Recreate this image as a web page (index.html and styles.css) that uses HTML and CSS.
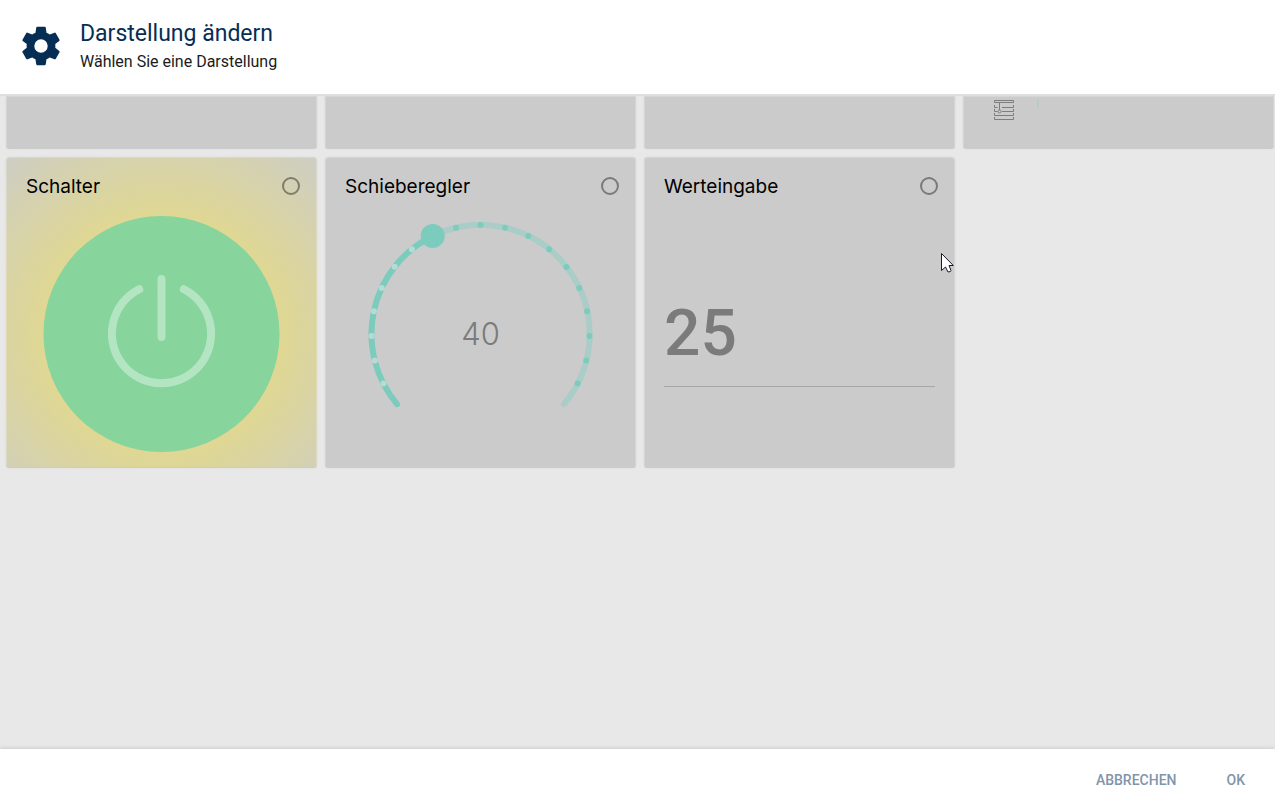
FILE: index.html
```html
<!DOCTYPE html>
<html lang="de">
<head>
    <meta charset="UTF-8">
    <meta name="viewport" content="width=device-width, initial-scale=1.0">
    <title>Darstellung ändern</title>
    <link rel="stylesheet" href="styles.css">
</head>
<body>

    <header class="dialog-header">
        <svg class="gear" viewBox="0 0 24 24" aria-hidden="true">
            <path d="M12,15.5A3.5,3.5 0 0,1 8.5,12A3.5,3.5 0 0,1 12,8.5A3.5,3.5 0 0,1 15.5,12A3.5,3.5 0 0,1 12,15.5M19.43,12.97C19.47,12.65 19.5,12.33 19.5,12C19.5,11.67 19.47,11.34 19.43,11L21.54,9.37C21.73,9.22 21.78,8.95 21.66,8.73L19.66,5.27C19.54,5.05 19.27,4.96 19.05,5.05L16.56,6.05C16.04,5.66 15.5,5.32 14.87,5.07L14.5,2.42C14.46,2.18 14.25,2 14,2H10C9.75,2 9.54,2.18 9.5,2.42L9.13,5.07C8.5,5.32 7.96,5.66 7.44,6.05L4.95,5.05C4.73,4.96 4.46,5.05 4.34,5.27L2.34,8.73C2.21,8.95 2.27,9.22 2.46,9.37L4.57,11C4.53,11.34 4.5,11.67 4.5,12C4.5,12.33 4.53,12.65 4.57,12.97L2.46,14.63C2.27,14.78 2.21,15.05 2.34,15.27L4.34,18.73C4.46,18.95 4.73,19.03 4.95,18.95L7.44,17.94C7.96,18.34 8.5,18.68 9.13,18.93L9.5,21.58C9.54,21.82 9.75,22 10,22H14C14.25,22 14.46,21.82 14.5,21.58L14.87,18.93C15.5,18.67 16.04,18.34 16.56,17.94L19.05,18.95C19.27,19.03 19.54,18.95 19.66,18.73L21.66,15.27C21.78,15.05 21.73,14.78 21.54,14.63L19.43,12.97Z"/>
        </svg>
        <div>
            <h1>Darstellung ändern</h1>
            <p>Wählen Sie eine Darstellung</p>
        </div>
    </header>

    <main class="dialog-content">
        <!-- end of the previous row -->
        <div class="card-row">
            <div class="card card-end"></div>
            <div class="card card-end"></div>
            <div class="card card-end"></div>
            <div class="card card-end">
                <svg class="blind-icon" viewBox="0 0 22 22" aria-hidden="true">
                    <path d="M1.5 1.5h19v2h-19zM1.5 6v2.500h3M9 8.500h11.500V6M1.500 10v2.500h3M9 12.500h11.500V10M1.500 14v2.500h19V14M1.500 18v2.500h19V18M6.500 4v7"/>
                    <circle cx="6.500" cy="12.500" r="1.500"/>
                </svg>
                <span class="tick"></span>
            </div>
        </div>

        <div class="card-row">
            <section class="card card-switch">
                <div class="card-title">
                    <label for="optSwitch">Schalter</label>
                    <input type="radio" name="display" id="optSwitch">
                </div>
                <button class="power" aria-label="Ein/Aus">
                    <svg viewBox="0 58 311 253">
                        <circle class="power-disc" cx="155.5" cy="177" r="118"/>
                        <path class="power-sign" d="M133.200 132.300A49.600 49.600 0 1 0 177.800 132.300M155.500 122V180"/>
                    </svg>
                </button>
            </section>

            <section class="card">
                <div class="card-title">
                    <label for="optSlider">Schieberegler</label>
                    <input type="radio" name="display" id="optSlider">
                </div>
                <svg class="dial" viewBox="0 58 311 253" role="slider" aria-label="Schieberegler" aria-valuemin="0" aria-valuemax="100" aria-valuenow="40">
                    <path class="track" d="M107.700 79A109 109 0 0 1 239 247.100"/>
                    <path class="filled" d="M72 247.100A109 109 0 0 1 107.700 79"/>
                    <path class="dots dots-light" pathLength="6.001" d="M58.400 226.500A109 109 0 0 1 86.900 92.300"/>
                    <path class="dots" pathLength="10.001" d="M131 70.800A109 109 0 0 1 252.600 226.500"/>
                    <circle class="handle" cx="107.700" cy="79" r="12"/>
                    <text x="155.500" y="188">40</text>
                </svg>
            </section>

            <section class="card">
                <div class="card-title">
                    <label for="optValue">Werteingabe</label>
                    <input type="radio" name="display" id="optValue">
                </div>
                <input class="value" type="text" inputmode="numeric" value="25" aria-label="Wert">
            </section>
        </div>
    </main>

    <footer class="dialog-footer">
        <button>Abbrechen</button>
        <button>OK</button>
    </footer>

    <svg class="cursor" viewBox="0 0 13 20" aria-hidden="true">
        <path d="M.5.500V17.500L4.500 14L7 19L9.500 18.500L10 17.500L8 12.500H12.300Z"/>
    </svg>

</body>
</html>
```
FILE: styles.css
```css
* {
    box-sizing: border-box;
}

body {
    display: flex;
    flex-direction: column;
    height: 100vh;
    margin: 0;
    overflow: hidden;
    background-color: #e8e8e8;
    color: #1b1b1b;
    font-family: Roboto, Arial, sans-serif;
}

h1, p {
    margin: 0;
    font-weight: 400;
}

button {
    border: none;
    background: none;
    cursor: pointer;
}

/* Header */
.dialog-header {
    display: flex;
    align-items: center;
    gap: 16px;
    padding: 18px 18px 20px;
    border-bottom: 2px solid #dedede;
    background-color: white;
}

.gear {
    width: 46px;
    height: 46px;
    fill: #062e55;
}

.dialog-header h1 {
    color: #062e55;
    font-size: 23px;
    line-height: 32px;
}

.dialog-header p {
    font-size: 16px;
    line-height: 24px;
}

/* Cards */
.dialog-content {
    display: flex;
    flex: 1;
    flex-direction: column;
    gap: 8px;
    min-height: 0;
    padding: 0 1px 0 6px;
    overflow: hidden;
}

.card-row {
    display: grid;
    grid-template-columns: repeat(4, 1fr);
    gap: 8px;
}

.card {
    display: flex;
    flex-direction: column;
    aspect-ratio: 1;
    border-radius: 4px;
    background-color: #cbcbcb;
    box-shadow: 0 0 2px rgba(0, 0, 0, 0.08), inset 0 0 0 1px rgba(255, 255, 255, 0.2), inset 0 -1px 0 #c0c0c0;
    overflow: hidden;
}

.card-end {
    flex-direction: row;
    gap: 22px;
    height: 53px;
    padding: 3px 30px;
    aspect-ratio: auto;
    border-radius: 0 0 4px 4px;
}

.blind-icon {
    width: 22px;
    height: 22px;
    fill: none;
    stroke: #7d7d7d;
}

.tick {
    width: 2px;
    height: 9px;
    background-color: #bbcbc5;
}

.card-switch {
    background: radial-gradient(circle at 50% 57%, #dfd793 120px, #cdcdc6 240px);
}

.card-title {
    display: flex;
    align-items: center;
    justify-content: space-between;
    height: 58px;
    padding: 0 17px 0 20px;
    color: black;
    font-family: Inter, sans-serif;
    font-size: 19px;
    font-weight: 400;
}

.card-title input {
    width: 18px;
    height: 18px;
    margin: 0;
    border: 2px solid rgba(0, 0, 0, 0.4);
    border-radius: 50%;
    appearance: none;
}

.card-title input:checked {
    background-color: #7bccbd;
}

/* Switch */
.power {
    padding: 0;
}

.power svg, .dial {
    display: block;
    width: 100%;
}

.power-disc {
    fill: #87d49c;
}

.power-sign {
    fill: none;
    stroke: #b4e5c3;
    stroke-width: 8;
    stroke-linecap: round;
}

/* Slider */
.track, .filled, .dots {
    fill: none;
    stroke: #7bccbd;
    stroke-width: 6;
    stroke-linecap: round;
}

.track {
    stroke: #abcdc7;
}

.dots {
    stroke-dasharray: 0 1;
}

.dots-light {
    stroke: #b9d9d3;
}

.handle {
    fill: #7bccbd;
}

.dial text {
    fill: #7b7b7b;
    font-family: Inter, sans-serif;
    font-size: 31px;
    font-weight: 300;
    text-anchor: middle;
}

/* Value input */
.value {
    height: 108px;
    margin: 64px 20px 0;
    padding: 2px 0 0;
    border: none;
    border-bottom: 1px solid #a6a6a6;
    border-radius: 0;
    background: none;
    color: #7b7b7b;
    font-family: Roboto, sans-serif;
    font-size: 64px;
    font-weight: 500;
}

/* Footer */
.dialog-footer {
    display: flex;
    justify-content: flex-end;
    gap: 18px;
    padding: 13px 14px 5px;
    background-color: white;
    box-shadow: 0 -1px 4px rgba(0, 0, 0, 0.12);
}

.dialog-footer button {
    height: 36px;
    padding: 0 16px;
    color: #7f95aa;
    font-family: Roboto, sans-serif;
    font-size: 14px;
    font-weight: 500;
    text-transform: uppercase;
}

.cursor {
    position: absolute;
    top: 253px;
    left: 941px;
    width: 13px;
    height: 20px;
    fill: white;
    stroke: #191927;
}
```
